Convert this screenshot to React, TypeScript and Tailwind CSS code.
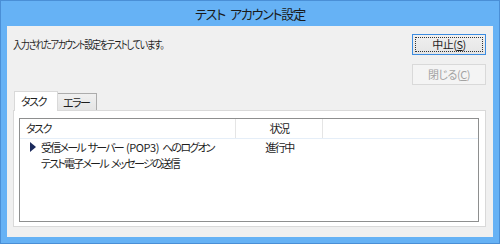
export default function App() {
    const font = "[font-family:'Noto_Sans_CJK_JP',sans-serif] [font-feature-settings:'palt']"
    return (
        <div className={`w-[500px] h-[244px] bg-[#66b2f5] border border-[#4a8fd6] flex flex-col ${font} text-[11px] tracking-[-1.5px] text-[#1e1e1e] whitespace-nowrap`}>
            <div className="h-[25px] flex items-center justify-center gap-[5px] text-[13px] tracking-[-1.2px] text-[#1a1a1a]">
                <span>テスト</span>
                <span>アカウント設定</span>
            </div>
            <div className="flex-1 mx-[6px] mb-[6px] bg-[#f0f0f0] flex flex-col pt-[8px] pl-[6px] pr-[7px] pb-[10px]">
                <div className="flex justify-between items-start">
                    <div className="pt-[1px] leading-[18px] inline-block scale-x-[0.82] origin-left">入力されたアカウント設定をテストしています。</div>
                    <div className="flex flex-col gap-[9px]">
                        <button className="w-[74px] h-[21px] border border-[#3c8ce0] bg-gradient-to-b from-[#f0f0f0] to-[#e5e5e5] p-[2px]">
                            <div className="w-full h-full border border-dotted border-[#333] flex items-center justify-center leading-none tracking-[-0.5px]">
                                中止(<span className="underline">S</span>)
                            </div>
                        </button>
                        <button disabled className="w-[74px] h-[21px] border border-[#d9d9d9] bg-[#f4f4f4] text-[#a3a3a3] flex items-center justify-center leading-none tracking-[-0.5px]">
                            閉じる(<span className="underline">C</span>)
                        </button>
                    </div>
                </div>
                <div className="flex items-end mt-[6px] pl-[1px] h-[19px]">
                    <div className="relative z-10 w-[44px] h-[20px] -mb-[1px] border border-b-0 border-[#d9d9d9] bg-white flex items-center pl-[6px] leading-none">
                        タスク
                    </div>
                    <div className="w-[39px] h-[17px] border border-b-0 border-l-0 border-[#acacac] bg-gradient-to-b from-[#f0f0f0] to-[#e5e5e5] flex items-center pl-[5px] leading-none">
                        エラー
                    </div>
                </div>
                <div className="flex-1 border border-[#d9d9d9] bg-white pt-[7px] pl-[5px] pr-[6px] pb-[4px] flex">
                    <div className="flex-1 border border-[#8e8f8f] bg-white flex flex-col">
                        <div className="flex h-[20px] border-b border-[#e5eef8]">
                            <div className="w-[216px] border-r border-[#e5e5e5] flex items-center pl-[6px]">タスク</div>
                            <div className="w-[87px] border-r border-[#e5e5e5] flex items-center justify-center">状況</div>
                        </div>
                        <div className="flex h-[16px] items-center">
                            <div className="w-[216px] flex items-center gap-[3px] pl-[10px] tracking-[-1.8px]">
                                <svg width="6" height="10" viewBox="0 0 6 10" className="mr-[2px] shrink-0">
                                    <path d="M0 0 L6 5 L0 10 Z" fill="#1b2a5c" />
                                </svg>
                                <span>受信メール</span>
                                <span>サーバー</span>
                                <span className="tracking-[-0.4px]">(POP3)</span>
                                <span>へのログオン</span>
                            </div>
                            <div className="w-[87px] text-center">進行中</div>
                        </div>
                        <div className="flex h-[16px] items-center">
                            <div className="w-[216px] flex gap-[3px] pl-[21px] tracking-[-1.8px]">
                                <span>テスト電子メール</span>
                                <span>メッセージの送信</span>
                            </div>
                        </div>
                    </div>
                </div>
            </div>
        </div>
    )
}
